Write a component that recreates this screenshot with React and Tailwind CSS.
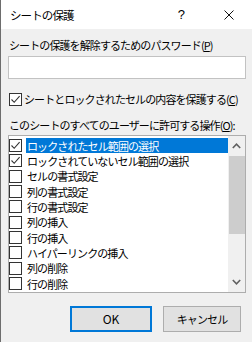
import React from "react";

const items = [
  { label: "ロックされたセル範囲の選択", checked: true, selected: true },
  { label: "ロックされていないセル範囲の選択", checked: true },
  { label: "セルの書式設定" },
  { label: "列の書式設定" },
  { label: "行の書式設定" },
  { label: "列の挿入" },
  { label: "行の挿入" },
  { label: "ハイパーリンクの挿入" },
  { label: "列の削除" },
  { label: "行の削除" },
];

const Check = ({ checked }) => (
  <div className="w-[13px] h-[13px] shrink-0 border border-[#333333] bg-white flex items-center justify-center">
    {checked && (
      <svg width="11" height="11" viewBox="0 0 11 11">
        <path d="M1.5 5.5 L4.2 8.3 L9.6 2.2" fill="none" stroke="#333333" strokeWidth="1.1" />
      </svg>
    )}
  </div>
);

const App = () => {
  return (
    <div
      className="w-[252px] h-[342px] bg-[#f0f0f0] border-l border-[#6d6d6d] flex flex-col text-black text-[11px] tracking-[-0.9px] leading-[14px]"
      style={{ fontFamily: '"Noto Sans CJK JP", sans-serif' }}
    >
      {/* title bar */}
      <div className="h-[29px] bg-white flex items-center shrink-0">
        <span className="ml-[9px] text-[11.5px]">シートの保護</span>
        <span className="ml-auto mr-[39px] text-[13px] tracking-normal" style={{ fontFamily: '"Liberation Sans", sans-serif' }}>
          ?
        </span>
        <svg className="mr-[18px]" width="10" height="10" viewBox="0 0 10 10">
          <path d="M0.5 0.5 L9.5 9.5 M9.5 0.5 L0.5 9.5" stroke="#111" strokeWidth="1" />
        </svg>
      </div>

      <div className="flex flex-col pl-[7px] pr-[6px]">
        <div className="mt-[9px] h-[14px] pl-[1px]">
          シートの保護を解除するためのパスワード(<span className="underline">P</span>)
        </div>
        <div className="mt-[4px] h-[23px] border border-[#c2c2c2] bg-white"></div>

        <div className="mt-[13px] h-[14px] flex items-center pl-[1px]">
          <Check checked />
          <span className="ml-[2px]">
            シートとロックされたセルの内容を保護する(<span className="underline">C</span>)
          </span>
        </div>

        <div className="mt-[12px] h-[14px] pl-[1px]">
          このシートのすべてのユーザーに許可する操作(<span className="underline">O</span>):
        </div>

        <div className="mt-[3px] h-[158px] border border-[#adadad] bg-white flex">
          <div className="flex-1 flex flex-col pt-[2px]">
            {items.map((item) => (
              <div key={item.label} className="h-[15.33px] flex items-center">
                <Check checked={item.checked} />
                <div
                  className={`ml-[4px] flex-1 h-full flex items-center pl-[1px] ${
                    item.selected ? "bg-[#0078d7] text-white" : ""
                  }`}
                >
                  {item.label}
                </div>
              </div>
            ))}
          </div>
          <div className="w-[17px] bg-[#f0f0f0] flex flex-col items-center">
            <div className="h-[20px] flex items-center justify-center">
              <svg width="9" height="6" viewBox="0 0 9 6">
                <path d="M0.8 5 L4.5 1.2 L8.2 5" fill="none" stroke="#606060" strokeWidth="1.6" />
              </svg>
            </div>
            <div className="w-[16px] h-[78px] bg-[#cdcdcd]"></div>
            <div className="flex-1"></div>
            <div className="h-[20px] flex items-center justify-center">
              <svg width="9" height="6" viewBox="0 0 9 6">
                <path d="M0.8 1 L4.5 4.8 L8.2 1" fill="none" stroke="#606060" strokeWidth="1.6" />
              </svg>
            </div>
          </div>
        </div>

        <div className="mt-[13px] flex justify-end gap-[11px] pr-[5px]">
          <button className="w-[82px] h-[26px] bg-[#e1e1e1] border-2 border-[#0078d7] flex items-center justify-center text-[12px] tracking-normal">
            OK
          </button>
          <button className="w-[78px] h-[26px] bg-[#e1e1e1] border border-[#adadad] flex items-center justify-center">
            キャンセル
          </button>
        </div>
      </div>
    </div>
  );
};

export default App;
